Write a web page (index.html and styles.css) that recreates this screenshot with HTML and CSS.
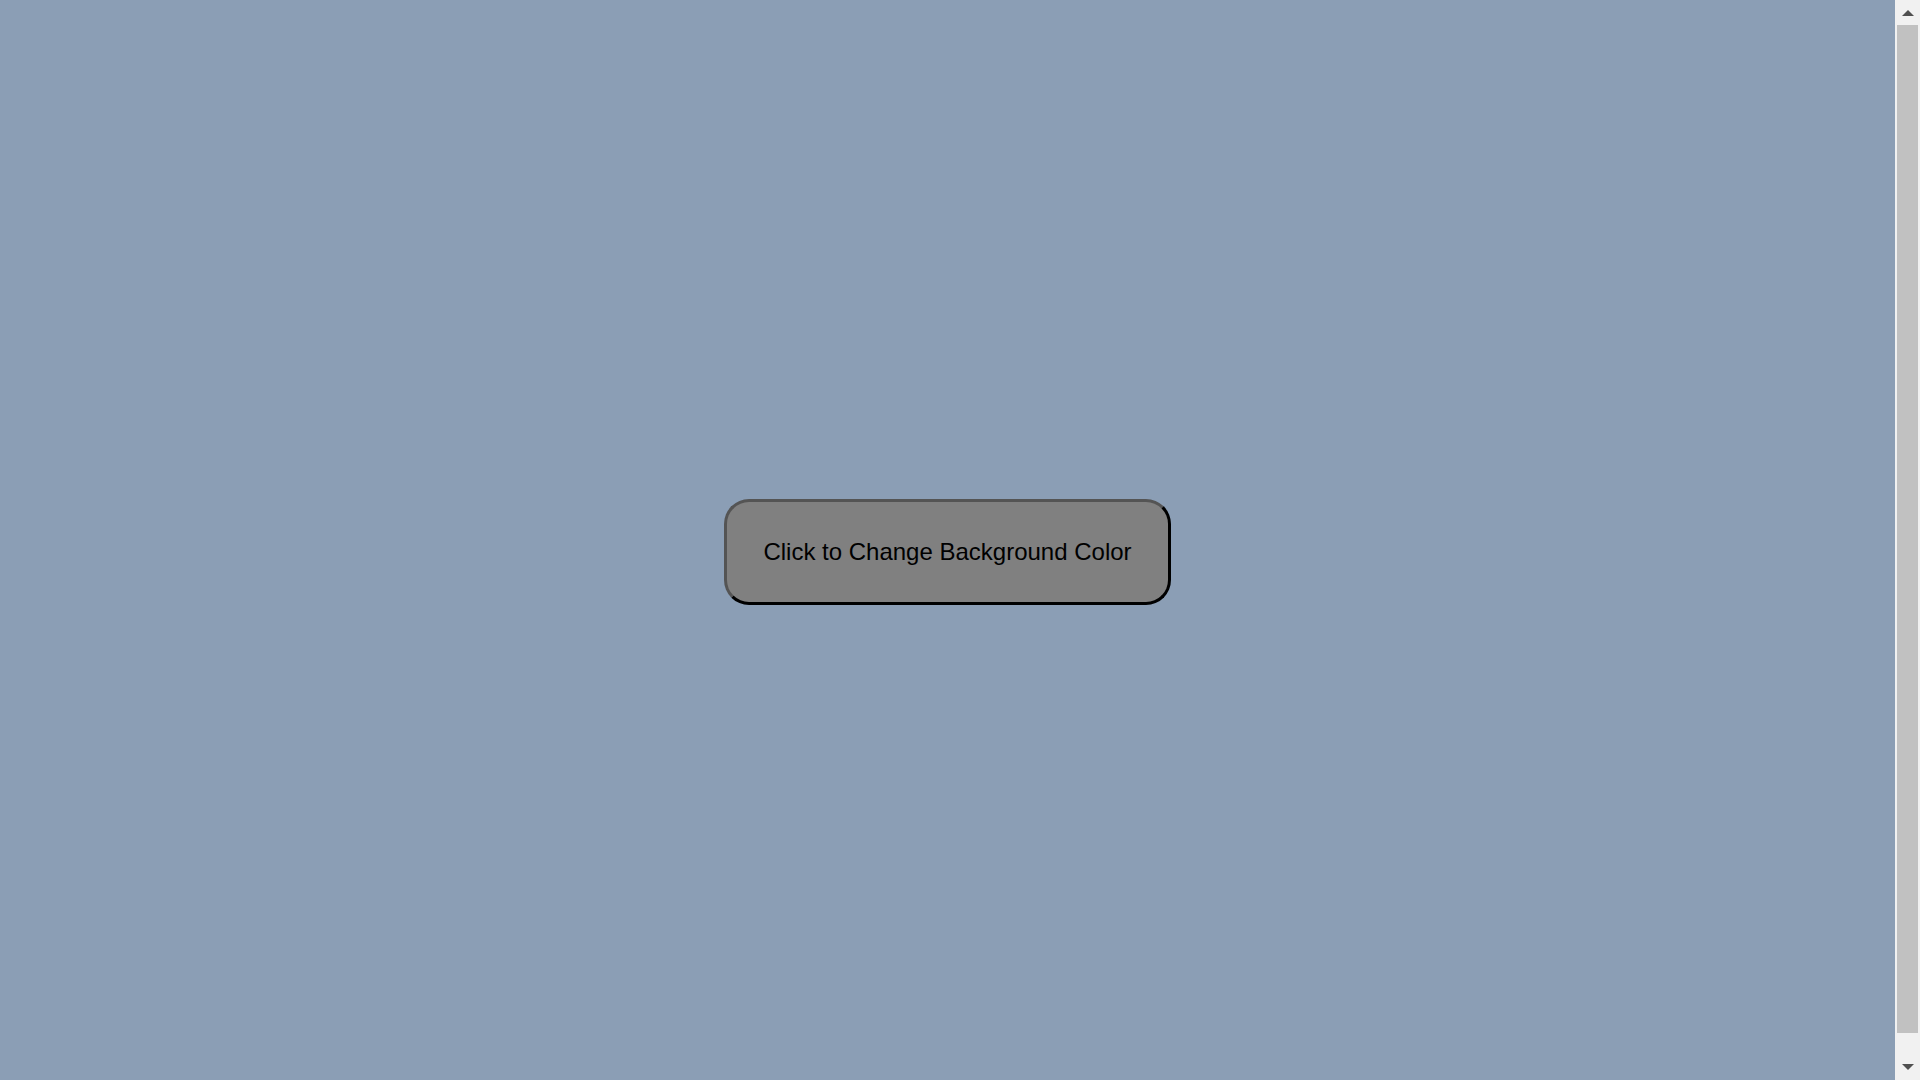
FILE: index.html
```html
<!DOCTYPE html>
<html lang="en">
<head>
<meta charset="UTF-8">
<title>Change Background Color</title>
<link rel="stylesheet" href="styles.css">
</head>
<body>
<div class="page">
  <main class="stage">
    <button class="change-btn" type="button">Click to Change Background Color</button>
  </main>
  <div class="scrollbar" aria-hidden="true">
    <div class="sb-arrow"><span class="tri tri-up"></span></div>
    <div class="sb-track">
      <div class="sb-thumb"></div>
    </div>
    <div class="sb-arrow"><span class="tri tri-down"></span></div>
  </div>
</div>
</body>
</html>
```
FILE: styles.css
```css
html, body {
  margin: 0;
  height: 100%;
  overflow: hidden;
  background: #8b9eb5;
}
body {
  font-family: "Liberation Sans", Arial, sans-serif;
}
.page {
  display: flex;
  height: 100vh;
}
.stage {
  flex: 1;
  display: flex;
  align-items: center;
  justify-content: center;
  padding: 24px 8px 0 8px;
}
.change-btn {
  padding: 36px 36px;
  border: 3px outset #000;
  border-radius: 25px;
  background: #808080;
  color: #000;
  font-family: "Liberation Sans", Arial, sans-serif;
  font-size: 24px;
  line-height: normal;
  cursor: pointer;
}
.scrollbar {
  width: 25px;
  background: #f1f1f1;
  display: flex;
  flex-direction: column;
}
.sb-arrow {
  height: 25px;
  display: flex;
  align-items: center;
  justify-content: center;
}
.tri {
  width: 0;
  height: 0;
  border-left: 6px solid transparent;
  border-right: 6px solid transparent;
}
.tri-up {
  border-bottom: 6px solid #505050;
  margin-top: 1px;
}
.tri-down {
  border-top: 6px solid #505050;
  margin-top: -1px;
}
.sb-track {
  flex: 1;
  padding: 0 2px 22px 2px;
  display: flex;
}
.sb-thumb {
  flex: 1;
  background: #c1c1c1;
}
```
